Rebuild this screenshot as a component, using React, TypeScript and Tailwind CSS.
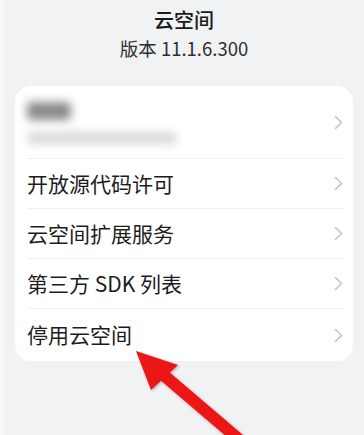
import React from 'react';

const font = { fontFamily: '"Noto Sans CJK SC", "Noto Sans", sans-serif' };

const Chevron = () => (
  <svg width="9" height="15" viewBox="0 0 9 15" className="shrink-0">
    <path d="M1.5 1.5 L7.5 7.5 L1.5 13.5" fill="none" stroke="#c4c4c4" strokeWidth="1.6" strokeLinecap="round" strokeLinejoin="round" />
  </svg>
);

const rows = ['开放源代码许可', '云空间扩展服务', '第三方 SDK 列表', '停用云空间'];

export default function App() {
  return (
    <div className="relative w-[364px] h-[435px] overflow-hidden bg-[#f1f2f4] border-l-4 border-[#f7f7f8]" style={font}>
      <div className="flex flex-col items-center pt-[5px]">
        <div className="text-[20px] leading-[30px] font-medium text-[#1b1b1b]">云空间</div>
        <div className="text-[18.5px] leading-[26px] text-[#2e2e2e]">版本 11.1.6.300</div>
      </div>

      <div className="mt-[25px] ml-[11px] w-[338px] bg-white rounded-[16px] pl-[12px] pr-[10px]">
        <div className="h-[73px] flex items-center justify-between border-b border-[#efefef]">
          <div className="flex flex-col gap-[12px] pt-[2px]">
            <div className="w-[44px] h-[18px] rounded bg-[#8a8a8a] blur-[5px]" />
            <div className="w-[150px] h-[12px] rounded bg-[#d8d8d8] blur-[5px]" />
          </div>
          <Chevron />
        </div>
        {rows.map((r, i) => (
          <div
            key={r}
            className={`flex items-center justify-between ${i === 3 ? 'h-[52px]' : 'h-[50px] border-b border-[#efefef]'}`}
          >
            <span className="text-[21px] text-[#1c1c1c]">{r}</span>
            <Chevron />
          </div>
        ))}
      </div>

      <svg className="absolute left-0 top-0 pointer-events-none" width="364" height="435" viewBox="0 0 364 435">
        <defs>
          <filter id="sh" x="-20%" y="-20%" width="140%" height="140%">
            <feDropShadow dx="1" dy="1" stdDeviation="1.5" floodColor="#000" floodOpacity="0.3" />
          </filter>
        </defs>
        <g filter="url(#sh)" fill="#ec1313">
          <line x1="156" y1="372" x2="245" y2="448" stroke="#ec1313" strokeWidth="12" />
          <polygon points="132,351 174,365 147,390" />
        </g>
      </svg>
    </div>
  );
}
